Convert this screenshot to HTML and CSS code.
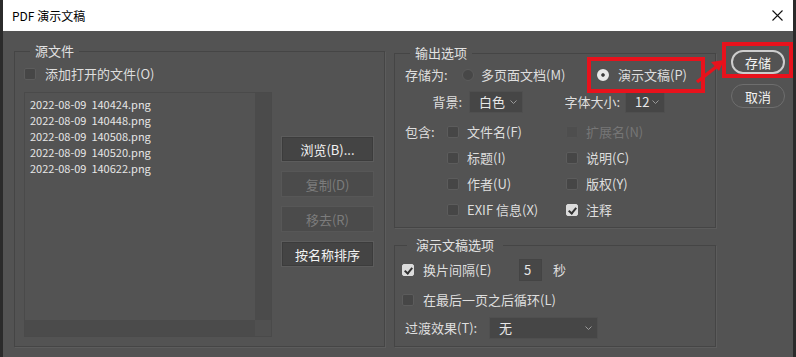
FILE: index.html
```html
<!DOCTYPE html>
<html lang="zh-CN">
<head>
  <meta charset="UTF-8" />
  <title>PDF 演示文稿</title>
  <link rel="stylesheet" href="styles.css">
</head>
<body>
  <div class="window">
    <div class="titlebar">
      <span class="title">PDF 演示文稿</span>
      <svg class="close" width="11" height="11" viewBox="0 0 11 11"><path d="M0.5 0.5 L10.5 10.5 M10.5 0.5 L0.5 10.5" stroke="#111" stroke-width="1.1" fill="none"/></svg>
    </div>

    <div class="content">
      <fieldset class="group source">
        <legend>源文件</legend>
        <label class="check"><span class="box"></span>添加打开的文件(O)</label>
        <div class="source-body">
          <div class="listbox">
            <ul class="files">
              <li>2022-08-09  140424.png</li>
              <li>2022-08-09  140448.png</li>
              <li>2022-08-09  140508.png</li>
              <li>2022-08-09  140520.png</li>
              <li>2022-08-09  140622.png</li>
            </ul>
            <div class="vscroll"></div>
            <div class="hscroll"></div>
            <div class="corner"></div>
          </div>
          <div class="side-buttons">
            <button class="btn">浏览(B)...</button>
            <button class="btn" disabled>复制(D)</button>
            <button class="btn" disabled>移去(R)</button>
            <button class="btn">按名称排序</button>
          </div>
        </div>
      </fieldset>

      <div class="right-col">
        <fieldset class="group output">
          <legend>输出选项</legend>
          <div class="row save-as">
            <span class="lbl">存储为:</span>
            <label class="option first"><span class="radio"></span>多页面文档(M)</label>
            <label class="option marked"><span class="radio on"></span>演示文稿(P)</label>
          </div>
          <div class="row tall">
            <span class="lbl right">背景:</span>
            <div class="select bg-select"><span>白色</span><svg width="7" height="4" viewBox="0 0 7 4"><path d="M0.5 0.5 L3.5 3.5 L6.5 0.5" stroke="#9a9a9a" fill="none"/></svg></div>
            <span class="lbl right size-lbl">字体大小:</span>
            <div class="select size-select"><span>12</span><svg width="7" height="4" viewBox="0 0 7 4"><path d="M0.5 0.5 L3.5 3.5 L6.5 0.5" stroke="#9a9a9a" fill="none"/></svg></div>
          </div>
          <div class="include">
            <span class="lbl">包含:</span>
            <label class="check"><span class="box"></span>文件名(F)</label>
            <label class="check disabled"><span class="box"></span>扩展名(N)</label>
            <span></span>
            <label class="check"><span class="box"></span>标题(I)</label>
            <label class="check"><span class="box"></span>说明(C)</label>
            <span></span>
            <label class="check"><span class="box"></span>作者(U)</label>
            <label class="check"><span class="box"></span>版权(Y)</label>
            <span></span>
            <label class="check"><span class="box"></span>EXIF 信息(X)</label>
            <label class="check"><span class="box on"></span>注释</label>
          </div>
        </fieldset>

        <fieldset class="group slideshow">
          <legend>演示文稿选项</legend>
          <div class="row tall">
            <label class="check interval"><span class="box on"></span>换片间隔(E)</label>
            <span class="num">5</span>
            <span class="lbl">秒</span>
          </div>
          <div class="row loop">
            <label class="check"><span class="box"></span>在最后一页之后循环(L)</label>
          </div>
          <div class="row tall effect">
            <span class="lbl effect-lbl">过渡效果(T):</span>
            <div class="select effect-select"><span>无</span><svg width="7" height="4" viewBox="0 0 7 4"><path d="M0.5 0.5 L3.5 3.5 L6.5 0.5" stroke="#9a9a9a" fill="none"/></svg></div>
          </div>
        </fieldset>
      </div>

      <div class="actions">
        <button class="pill primary">存储</button>
        <button class="pill">取消</button>
      </div>
    </div>

    <!-- annotation arrow -->
    <svg class="arrow" width="796" height="357" viewBox="0 0 796 357">
      <path d="M697 82 L716 67" stroke="#e8121c" stroke-width="3.5" fill="none"/>
      <polygon points="724,60 719,71 711,62" fill="#e8121c"/>
    </svg>
  </div>
</body>
</html>
```

FILE: styles.css
```css
body {
  margin: 0;
  background: #535353;
  font-family: "Noto Sans CJK SC", "Microsoft YaHei", sans-serif;
  overflow: hidden;
}
.window {
  position: relative;
  width: 796px;
  height: 357px;
  box-sizing: border-box;
  background: #535353;
  border-left: 3px solid #2b2b2b;
  border-right: 3px solid #2b2b2b;
  color: #dedede;
  font-size: 13px;
  line-height: 16px;
}
.titlebar {
  height: 31px;
  background: #fff;
  display: flex;
  align-items: center;
  justify-content: space-between;
  padding: 0 10px 0 9px;
}
.title {
  color: #000;
  font-size: 12px;
}
.close {
  display: block;
}
.content {
  display: flex;
  height: 326px;
  box-sizing: border-box;
  padding: 0 8px 10px 11px;
}

/* group boxes */
.group {
  margin: 0;
  min-width: 0;
  box-sizing: border-box;
  border: 1px solid #454545;
  box-shadow: 1px 1px 0 #5c5c5c;
}
.group legend {
  padding: 0 5px;
  font-size: 13px;
  line-height: 16px;
  color: #e2e2e2;
}
.source {
  width: 371px;
  margin-top: 12px;
  padding: 7px 9px 9px 9px;
  display: flex;
  flex-direction: column;
}
.source legend {
  margin-left: 6px;
}
.source-body {
  flex: 1;
  display: flex;
  gap: 10px;
  margin-top: 10px;
  min-height: 0;
}
.listbox {
  width: 248px;
  box-sizing: border-box;
  border: 1px solid #4a4a4a;
  display: grid;
  grid-template-columns: 1fr 16px;
  grid-template-rows: 1fr 16px;
  overflow: hidden;
}
.files {
  list-style: none;
  margin: 0;
  padding: 3px 5px;
  font-size: 11px;
  line-height: 16px;
  color: #e6e6e6;
  min-height: 0;
}
.files li {
  white-space: pre;
}
.vscroll, .hscroll {
  background: #4b4b4b;
}
.corner {
  background: #505050;
}
.side-buttons {
  width: 91px;
  padding-top: 45px;
  display: flex;
  flex-direction: column;
  gap: 11px;
}
.btn {
  height: 24px;
  box-sizing: border-box;
  background: #444;
  border: 1px solid #3c3c3c;
  box-shadow: 0 0 0 1px #5c5c5c;
  color: #f2f2f2;
  font-family: inherit;
  font-size: 13px;
  padding: 0;
}
.btn:disabled {
  background: #4b4b4b;
  border-color: #4b4b4b;
  box-shadow: 0 0 0 1px #575757;
  color: #7c7c7c;
}

/* right column */
.right-col {
  width: 322px;
  margin-left: 9px;
  display: flex;
  flex-direction: column;
}
.output {
  height: 183px;
  margin-top: 14px;
  padding: 4px 10px 0 10px;
}
.output legend {
  margin-left: 5px;
}
.slideshow {
  height: 110px;
  margin-top: 9px;
  padding: 6px 7px 0 7px;
}
.slideshow legend {
  margin-left: 5px;
  padding: 0 9px;
}
.row {
  display: flex;
  align-items: center;
  height: 20px;
}
.row.tall {
  height: 22px;
}
.output .row.tall {
  margin-top: 6px;
}
.save-as .lbl {
  width: 57px;
}
.lbl {
  white-space: nowrap;
}
.lbl.right {
  text-align: right;
  width: 57px;
  margin-right: 7px;
}
.size-lbl {
  width: 97px !important;
  margin-right: 5px !important;
}
.option {
  display: inline-flex;
  align-items: center;
  gap: 7px;
  white-space: nowrap;
}
.option.first {
  width: 135px;
}
.option.marked {
  position: relative;
  gap: 9px;
}
.option.marked::after {
  content: "";
  position: absolute;
  left: -10px;
  top: -10px;
  width: 110px;
  height: 28px;
  border: 4px solid #e8121c;
}
.radio {
  width: 12px;
  height: 12px;
  box-sizing: border-box;
  border-radius: 50%;
  background: #474747;
  border: 1px solid #5c5c5c;
}
.radio.on {
  background: #e8e8e8;
  border: 4px solid #e8e8e8;
  box-shadow: inset 0 0 0 2px #3a3a3a;
}
.select {
  height: 22px;
  box-sizing: border-box;
  background: #464646;
  border: 1px solid #4f4f4f;
  display: flex;
  align-items: center;
  justify-content: space-between;
  padding: 0 5px 0 9px;
  color: #e8e8e8;
}
.bg-select {
  width: 54px;
}
.size-select {
  width: 40px;
}
.effect-select {
  width: 109px;
}
.include {
  display: grid;
  grid-template-columns: 42px 119px auto;
  grid-auto-rows: 20px;
  row-gap: 6px;
  margin-top: 9px;
  align-items: center;
}
.check {
  display: inline-flex;
  align-items: center;
  gap: 8px;
  white-space: nowrap;
}
.box {
  width: 12px;
  height: 12px;
  box-sizing: border-box;
  border-radius: 2px;
  background: #464646;
  border: 1px solid #5c5c5c;
  position: relative;
}
.box.on {
  background: #dcdcdc;
  border-color: #dcdcdc;
}
.box.on::after {
  content: "";
  position: absolute;
  left: 3px;
  top: 1px;
  width: 3px;
  height: 6px;
  border: solid #333;
  border-width: 0 2px 2px 0;
  transform: rotate(40deg);
}
.check.disabled {
  color: #767676;
}
.check.disabled .box {
  background: #4e4e4e;
  border-color: #545454;
}
.source > .check {
  height: 16px;
  gap: 9px;
}
.interval {
  width: 117px;
  gap: 9px;
}
.loop {
  margin-top: 9px;
}
.loop .check {
  gap: 9px;
}
.num {
  width: 23px;
  height: 22px;
  box-sizing: border-box;
  background: #474747;
  border: 1px solid #444;
  padding-left: 4px;
  line-height: 20px;
  margin-right: 11px;
  color: #e8e8e8;
}
.effect {
  margin-top: 7px;
}
.effect-lbl {
  width: 84px;
  margin-left: 3px;
}

/* dialog buttons */
.actions {
  margin-left: 15px;
  padding-top: 19px;
  display: flex;
  flex-direction: column;
  gap: 10px;
}
.pill {
  width: 54px;
  height: 24px;
  box-sizing: border-box;
  border-radius: 12px;
  background: #535353;
  border: 1px solid #6e6e6e;
  color: #f2f2f2;
  font-family: inherit;
  font-size: 13px;
  padding: 0;
}
.pill.primary {
  position: relative;
  border: 2px solid #cdcdcd;
}
.pill.primary::after {
  content: "";
  position: absolute;
  left: -11px;
  top: -10px;
  width: 71px;
  height: 36px;
  box-sizing: border-box;
  border: 4px solid #e8121c;
}
.arrow {
  position: absolute;
  left: -3px;
  top: 0;
  pointer-events: none;
}
```
